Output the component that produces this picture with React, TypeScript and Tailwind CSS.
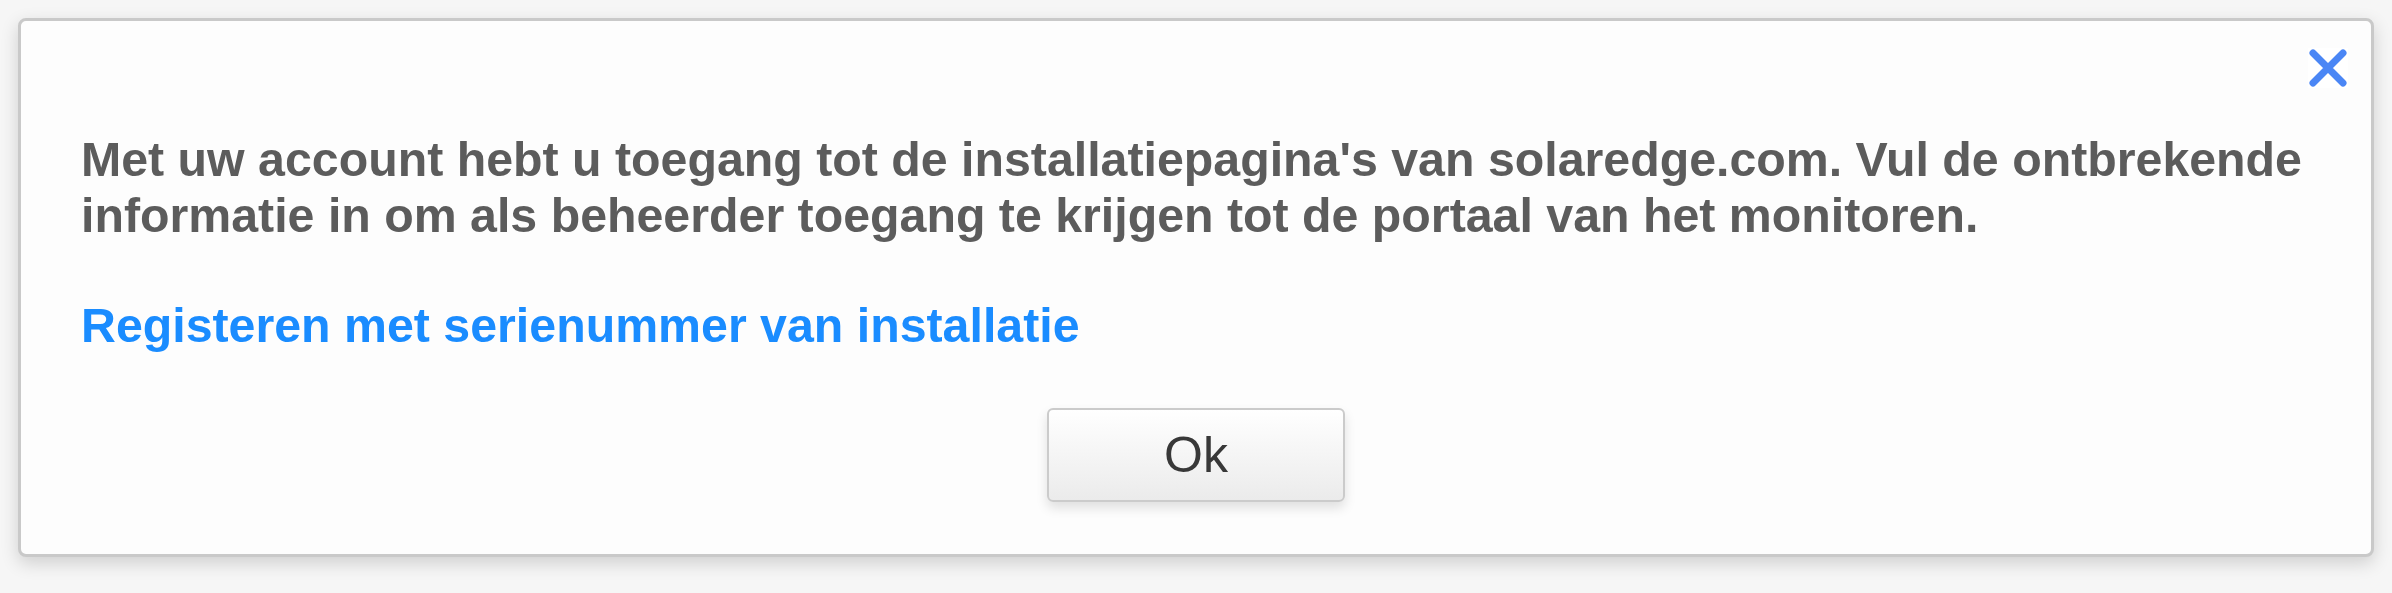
export default function App() {
  return (
    <div className="min-h-[593px] bg-[#f6f6f6] pt-[18px] px-[18px] pb-[36px] font-['Liberation_Sans',Arial,sans-serif]">
      <div className="flex flex-col rounded-[8px] border-[3px] border-[#c9c9c9] bg-[#fdfdfd] pb-[52px] shadow-[0_6px_18px_rgba(0,0,0,0.16)]">
        <div className="flex justify-end pt-[27px] pr-[23px]">
          <button className="flex h-[40px] w-[40px] items-center justify-center bg-white">
            <svg width="40" height="40" viewBox="0 0 40 40" fill="none">
              <path
                d="M5 5L35 35M35 5L5 35"
                stroke="#4a86f5"
                strokeWidth="7"
                strokeLinecap="round"
              />
            </svg>
          </button>
        </div>

        <div className="flex flex-col px-[60px] pt-[43px]">
          <p className="text-[48.3px] font-bold leading-[56px] text-[#5c5c5c]">
            Met uw account hebt u toegang tot de installatiepagina's van solaredge.com. Vul de ontbrekende
            <br />
            informatie in om als beheerder toegang te krijgen tot de portaal van het monitoren.
          </p>

          <a href="#" className="mt-[54px] text-[48.3px] font-bold leading-[56px] text-[#1a8cff]">
            Registeren met serienummer van installatie
          </a>

          <div className="mt-[55px] flex justify-center">
            <button className="h-[94px] w-[298px] rounded-[6px] border-2 border-[#cbcbcb] bg-gradient-to-b from-white to-[#ebebeb] text-[50px] leading-none text-[#383838] shadow-[0_6px_12px_rgba(0,0,0,0.12)]">
              Ok
            </button>
          </div>
        </div>
      </div>
    </div>
  );
}
